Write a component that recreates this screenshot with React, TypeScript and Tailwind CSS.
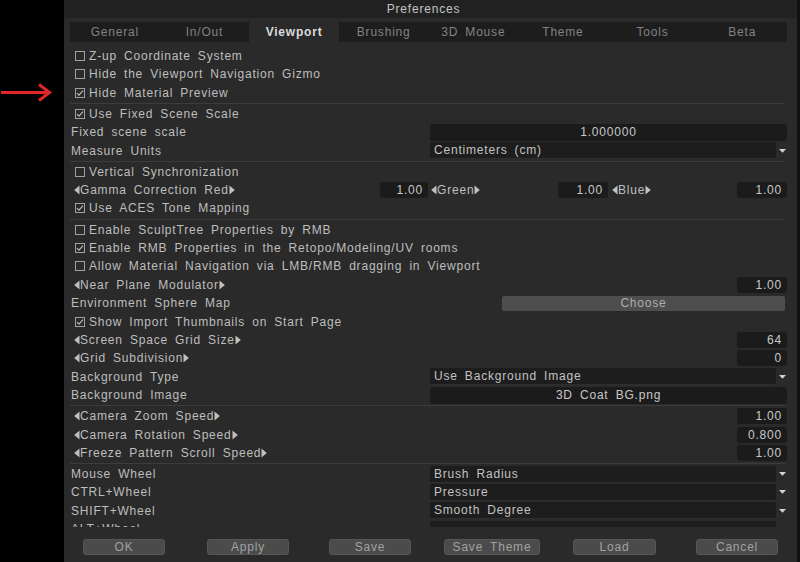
import React from 'react';

const TABS = ['General', 'In/Out', 'Viewport', 'Brushing', '3D Mouse', 'Theme', 'Tools', 'Beta'];

function Check({ on }: { on?: boolean }) {
  return (
    <span className="w-[10px] h-[10px] border border-[#a0a0a0] flex items-center justify-center mr-[4px] shrink-0">
      {on && (
        <svg width="8" height="8" viewBox="0 0 8 8">
          <path d="M1 4.2 L3 6.2 L7 1.6" fill="none" stroke="#c0c0c0" strokeWidth="1.1" />
        </svg>
      )}
    </span>
  );
}

function Tri({ right }: { right?: boolean }) {
  return (
    <svg width="6" height="10" viewBox="0 0 6 10" className="shrink-0">
      <path d={right ? 'M0.5 0.5 L5.8 5 L0.5 9.5 Z' : 'M5.5 0.5 L0.2 5 L5.5 9.5 Z'} fill="#c0c0c0" />
    </svg>
  );
}

function Row({ children }: { children: React.ReactNode }) {
  return <div className="h-[18.4px] flex items-center">{children}</div>;
}

function Sep() {
  return (
    <div className="h-[2.7px] flex items-center">
      <div className="h-px w-[715px] bg-[#3c3c3c]" />
    </div>
  );
}

function CheckRow({ on, text }: { on?: boolean; text: string }) {
  return (
    <Row>
      <div className="flex items-center pl-[5px]">
        <Check on={on} />
        <span>{text}</span>
      </div>
    </Row>
  );
}

function ArrowLabel({ text }: { text: string }) {
  return (
    <span className="flex items-center">
      <Tri />
      <span>{text}</span>
      <Tri right />
    </span>
  );
}

function NumBox({ value, w = 'w-[50px]' }: { value: string; w?: string }) {
  return (
    <div className={`${w} h-[16px] rounded-[3px] bg-[#1b1b1b] text-right pr-[5px] leading-[16px] text-[#c8c8c8] shrink-0`}>
      {value}
    </div>
  );
}

function ArrowRow({ text, value }: { text: string; value: string }) {
  return (
    <Row>
      <div className="flex-1 pl-[4px]">
        <ArrowLabel text={text} />
      </div>
      <NumBox value={value} />
    </Row>
  );
}

function Dropdown({ text }: { text: string }) {
  return (
    <div className="w-[357px] flex items-center">
      <div className="w-[347px] h-[17px] bg-[#1d1d1d] rounded-[2px] border-b border-[#2e2e2e] pl-[4px] leading-[17px] text-[#c2c2c2]">
        {text}
      </div>
      <svg width="10" height="6" viewBox="0 0 10 6" className="ml-[1px]">
        <path d="M2 1 L9 1 L5.5 4.8 Z" fill="#d4d4d4" />
      </svg>
    </div>
  );
}

function LabelRow({ text, children }: { text: string; children: React.ReactNode }) {
  return (
    <Row>
      <div className="flex-1 pl-[1px]">{text}</div>
      {children}
    </Row>
  );
}

function Btn({ text, w = 'w-[82px]' }: { text: string; w?: string }) {
  return (
    <div className={`${w} h-[16px] rounded-[3px] bg-[#4b4b4b] border border-[#565656] text-center leading-[14px] text-[#a2a2a2]`}>
      {text}
    </div>
  );
}

export default function App() {
  return (
    <div className="w-[800px] h-[562px] bg-black flex overflow-hidden font-['Liberation_Sans',Arial,sans-serif] text-[12px] tracking-[0.8px] [word-spacing:3px] text-[#bebebe]">
      {/* annotation arrow */}
      <div className="w-[64px] shrink-0 pt-[83px]">
        <svg width="56" height="19" viewBox="0 0 56 19">
          <path d="M1 9.5 L48 9.5" stroke="#e02828" strokeWidth="3" />
          <path d="M39 1.5 L49.5 9.5 L39 17.5" fill="none" stroke="#e02828" strokeWidth="3" />
        </svg>
      </div>

      {/* dialog */}
      <div className="w-[733px] shrink-0 bg-[#2a2a2a] flex flex-col">
        <div className="h-[18px] bg-[#212121] text-center leading-[18px] text-[#c4c4c4] pr-[14px]">Preferences</div>
        <div className="h-[4px]" />
        <div className="ml-[6px] w-[717px] h-[20px] bg-[#1d1d1d] grid grid-cols-8">
          {TABS.map((t) => (
            <div
              key={t}
              className={
                t === 'Viewport'
                  ? 'bg-[#2a2a2a] text-center leading-[20px] text-[#dcdcdc] font-bold'
                  : 'text-center leading-[20px] text-[#828282]'
              }
            >
              {t}
            </div>
          ))}
        </div>

        <div className="ml-[6px] w-[717px] h-[485px] overflow-hidden pt-[4.8px]">
          <CheckRow text="Z-up Coordinate System" />
          <CheckRow text="Hide the Viewport Navigation Gizmo" />
          <CheckRow on text="Hide Material Preview" />
          <Sep />
          <CheckRow on text="Use Fixed Scene Scale" />
          <LabelRow text="Fixed scene scale">
            <div className="w-[357px] h-[17px] bg-[#1b1b1b] rounded-[3px] text-center leading-[17px] text-[#c8c8c8]">1.000000</div>
          </LabelRow>
          <LabelRow text="Measure Units">
            <Dropdown text="Centimeters (cm)" />
          </LabelRow>
          <Sep />
          <CheckRow text="Vertical Synchronization" />
          <Row>
            <div className="w-[310px] pl-[4px]">
              <ArrowLabel text="Gamma Correction Red" />
            </div>
            <NumBox value="1.00" w="w-[48px]" />
            <div className="w-[130px] pl-[3px]">
              <ArrowLabel text="Green" />
            </div>
            <NumBox value="1.00" />
            <div className="w-[129px] pl-[4px]">
              <ArrowLabel text="Blue" />
            </div>
            <NumBox value="1.00" />
          </Row>
          <CheckRow on text="Use ACES Tone Mapping" />
          <Sep />
          <CheckRow text="Enable SculptTree Properties by RMB" />
          <CheckRow on text="Enable RMB Properties in the Retopo/Modeling/UV rooms" />
          <CheckRow text="Allow Material Navigation via LMB/RMB dragging in Viewport" />
          <ArrowRow text="Near Plane Modulator" value="1.00" />
          <LabelRow text="Environment Sphere Map">
            <div className="w-[283px] h-[15px] mr-[2px] bg-[#4e4e4e] rounded-[2px] text-center leading-[15px] text-[#adadad]">Choose</div>
          </LabelRow>
          <CheckRow on text="Show Import Thumbnails on Start Page" />
          <ArrowRow text="Screen Space Grid Size" value="64" />
          <ArrowRow text="Grid Subdivision" value="0" />
          <LabelRow text="Background Type">
            <Dropdown text="Use Background Image" />
          </LabelRow>
          <LabelRow text="Background Image">
            <div className="w-[357px] h-[17px] bg-[#1b1b1b] rounded-[3px] text-center leading-[17px] text-[#c8c8c8]">3D Coat BG.png</div>
          </LabelRow>
          <Sep />
          <ArrowRow text="Camera Zoom Speed" value="1.00" />
          <ArrowRow text="Camera Rotation Speed" value="0.800" />
          <ArrowRow text="Freeze Pattern Scroll Speed" value="1.00" />
          <Sep />
          <LabelRow text="Mouse Wheel">
            <Dropdown text="Brush Radius" />
          </LabelRow>
          <LabelRow text="CTRL+Wheel">
            <Dropdown text="Pressure" />
          </LabelRow>
          <LabelRow text="SHIFT+Wheel">
            <Dropdown text="Smooth Degree" />
          </LabelRow>
          <LabelRow text="ALT+Wheel">
            <Dropdown text="" />
          </LabelRow>
        </div>

        <div className="flex-1 flex items-start px-[19px] pt-[12px]">
          <Btn text="OK" />
          <div className="w-[42px]" />
          <Btn text="Apply" />
          <div className="w-[40px]" />
          <Btn text="Save" />
          <div className="w-[33px]" />
          <Btn text="Save Theme" w="w-[96px]" />
          <div className="w-[33px]" />
          <Btn text="Load" w="w-[83px]" />
          <div className="w-[40px]" />
          <Btn text="Cancel" />
        </div>
      </div>
      <div className="flex-1 bg-[#111]" />
    </div>
  );
}
